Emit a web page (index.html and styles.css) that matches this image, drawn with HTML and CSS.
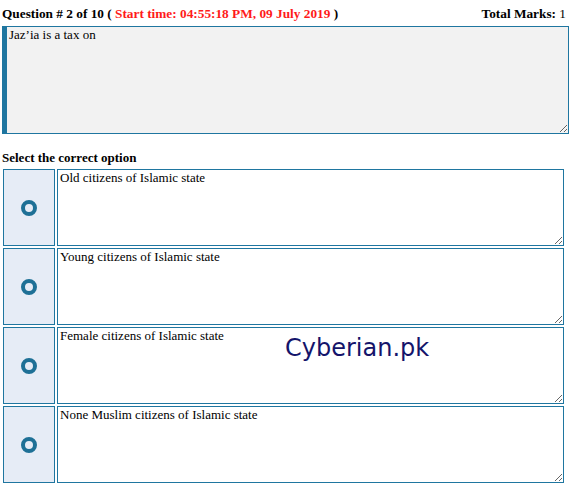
FILE: index.html
```html
<!DOCTYPE html>
<html>
<head>
<meta charset="utf-8">
<link rel="stylesheet" href="styles.css">
</head>
<body>
<div class="page">
  <div class="header">
    <div class="qnum">Question # 2 of 10 ( <span class="start">Start time: 04:55:18 PM, 09 July 2019</span> )</div>
    <div class="marks">Total Marks: <span class="normal">1</span></div>
  </div>
  <textarea class="question" readonly>Jaz’ia is a tax on</textarea>
  <div class="select">Select the correct option</div>
  <div class="options">
    <div class="option">
      <div class="radio"><span class="ring"></span></div>
      <textarea class="answer" readonly>Old citizens of Islamic state</textarea>
    </div>
    <div class="option">
      <div class="radio"><span class="ring"></span></div>
      <textarea class="answer" readonly>Young citizens of Islamic state</textarea>
    </div>
    <div class="option">
      <div class="radio"><span class="ring"></span></div>
      <textarea class="answer" readonly>Female citizens of Islamic state</textarea>
      <div class="watermark">Cyberian.pk</div>
    </div>
    <div class="option">
      <div class="radio"><span class="ring"></span></div>
      <textarea class="answer" readonly>None Muslim citizens of Islamic state</textarea>
    </div>
  </div>
</div>
</body>
</html>
```

FILE: styles.css
```css
html, body {
  margin: 0;
  padding: 0;
  background: #ffffff;
}
body {
  font-family: "Liberation Serif", "Times New Roman", serif;
  color: #000;
  width: 571px;
  height: 489px;
  overflow: hidden;
}
.page {
  padding: 5px 2px 0 2px;
}
.header {
  display: flex;
  justify-content: space-between;
  align-items: baseline;
  font-weight: bold;
  font-size: 13.3px;
  line-height: 17px;
  padding-right: 3px;
}
.normal {
  font-weight: normal;
}
.start {
  color: #ff1a1a;
}
textarea {
  font-family: "Liberation Serif", "Times New Roman", serif;
  font-size: 13px;
  line-height: 14px;
  color: #000;
  padding: 1px 2px 2px 2px;
  margin: 0;
  box-sizing: border-box;
  outline: none;
  display: block;
}
.question {
  margin-top: 4px;
  width: 567px;
  height: 108px;
  background: #f2f2f2;
  border: 1px solid #1f76a0;
  border-left: 5px solid #1f76a0;
}
.select {
  font-weight: bold;
  font-size: 13px;
  line-height: 15px;
  margin-top: 16px;
  margin-bottom: 4px;
}
.options {
  display: flex;
  flex-direction: column;
  gap: 2px;
  padding-left: 1px;
}
.option {
  display: flex;
  gap: 2px;
  height: 77px;
  position: relative;
}
.radio {
  width: 52px;
  box-sizing: border-box;
  border: 1px solid #1f76a0;
  background: #e6ecf6;
  display: flex;
  align-items: center;
  justify-content: center;
}
.ring {
  width: 16px;
  height: 16px;
  box-sizing: border-box;
  border: 4px solid #1e7096;
  border-radius: 50%;
}
.answer {
  width: 507px;
  height: 77px;
  background: #fff;
  border: 1px solid #1f76a0;
}
.watermark {
  position: absolute;
  left: 282px;
  top: 9px;
  font-family: "DejaVu Sans", Verdana, sans-serif;
  font-size: 24px;
  line-height: 24px;
  color: #14146a;
  pointer-events: none;
}
```
